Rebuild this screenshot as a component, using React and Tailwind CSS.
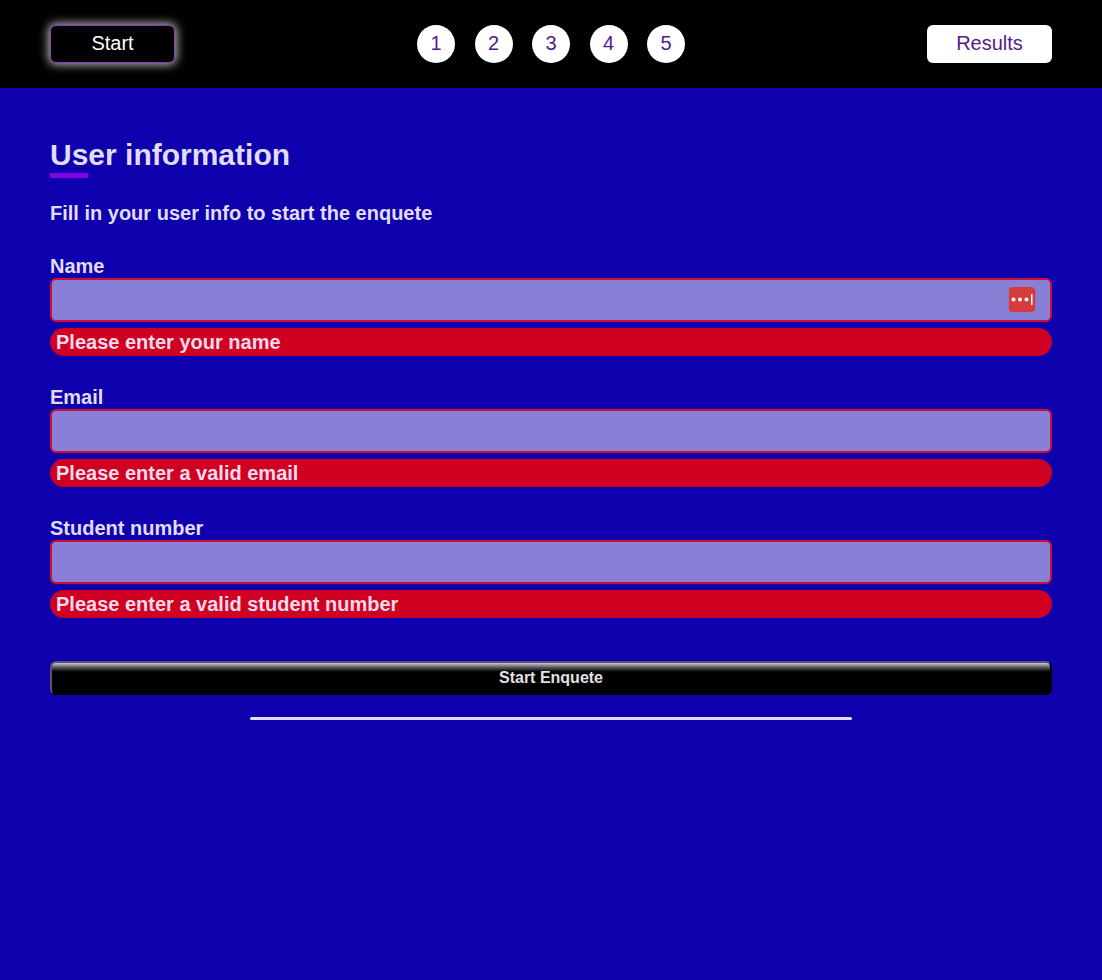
const steps = [1, 2, 3, 4, 5];

const fields = [
  { id: "name", label: "Name", type: "text", error: "Please enter your name", manager: true },
  { id: "email", label: "Email", type: "email", error: "Please enter a valid email" },
  { id: "student-number", label: "Student number", type: "text", error: "Please enter a valid student number" },
];

function PasswordManagerIcon() {
  return (
    <svg viewBox="0 0 28 26" className="absolute top-[9px] right-4 h-[26px] w-7" aria-hidden="true">
      <rect x="0.8" y="0" width="26.4" height="25" rx="4" fill="#d63c3b" />
      <circle cx="5.5" cy="12.5" r="2" fill="#fff" />
      <circle cx="12" cy="12.5" r="2" fill="#fff" />
      <circle cx="18.5" cy="12.5" r="2" fill="#fff" />
      <rect x="23" y="7" width="1.5" height="11" rx="0.5" fill="#fff" />
    </svg>
  );
}

function Field({ id, label, type, error, manager }) {
  return (
    <div className="flex flex-col">
      <label htmlFor={id} className="self-start leading-6">{label}</label>
      <div className="relative">
        <input
          id={id}
          type={type}
          aria-invalid="true"
          aria-describedby={id + "-error"}
          className="block h-11 w-full rounded-md border-2 border-[#d00c34] bg-[#8780d6] px-2 font-normal text-black outline-none"
        />
        {manager && <PasswordManagerIcon />}
      </div>
      <p id={id + "-error"} className="mt-1.5 rounded-full bg-[#d00023] px-1.5 leading-7 text-[#fbdbe9]">
        {error}
      </p>
    </div>
  );
}

export default function App() {
  return (
    <div className="min-h-screen bg-[#0e00ad] font-['Liberation_Sans',Arial,sans-serif] text-xl text-[#e1dcfa]">
      <header className="flex items-center justify-between bg-black px-[50px] py-[25px]">
        <a href="#start" className="h-[38px] w-[125px] rounded-md border border-[#8a3fc0] bg-black text-center leading-[34px] text-white shadow-[0_0_10px_2px_#ffffffb0]">
          Start
        </a>
        <nav aria-label="Questions" className="flex w-[268px] justify-between">
          {steps.map((step) => (
            <a key={step} href={"#question-" + step} className="size-[38px] rounded-full bg-white text-center leading-9 text-[#551a8b]">
              {step}
            </a>
          ))}
        </nav>
        <a href="#results" className="h-[38px] w-[125px] rounded-md bg-white text-center leading-9 text-[#551a8b]">
          Results
        </a>
      </header>
      <main className="px-[50px] pt-[49px] font-bold">
        <h1 className="text-3xl leading-9">User information</h1>
        <div className="h-[5px] w-[38px] bg-[#8000e8]" />
        <h2 className="mt-[23px] leading-6">Fill in your user info to start the enquete</h2>
        <form className="mt-[29px]" noValidate onSubmit={(event) => event.preventDefault()}>
          <div className="flex flex-col gap-[29px]">
            {fields.map((field) => (
              <Field key={field.id} {...field} />
            ))}
          </div>
          <button
            type="submit"
            className="mt-[43px] block h-[34px] w-full rounded-md border-2 border-t-[#5b5273] border-r-black border-b-black border-l-[#5b5273] bg-black bg-linear-to-b from-[#cbc8d3] to-black to-[10px] text-center text-base leading-[30px] text-[#e3e0e3]"
          >
            Start Enquete
          </button>
        </form>
        <hr className="mx-auto mt-[22px] h-[3px] w-3/5 rounded-full border-0 bg-[#e1dcfa]" />
      </main>
    </div>
  );
}
